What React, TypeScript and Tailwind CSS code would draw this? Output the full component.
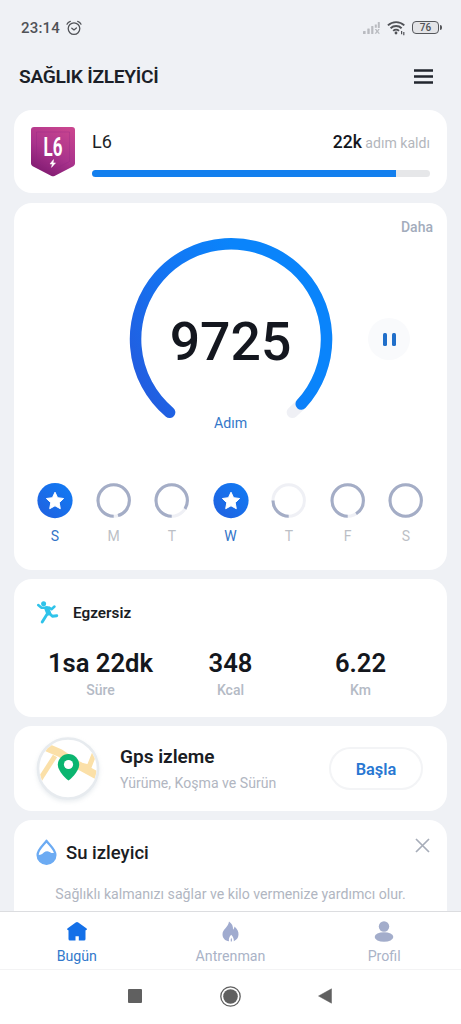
import type { ReactNode } from 'react';

type Day = { label: string; progress: number };

const days: Day[] = [
  { label: 'S', progress: 1.1 },
  { label: 'M', progress: 0.955 },
  { label: 'T', progress: 0.84 },
  { label: 'W', progress: 1.1 },
  { label: 'T', progress: 0.25 },
  { label: 'F', progress: 0.91 },
  { label: 'S', progress: 1 },
];

function Card({ className, children }: { className: string; children: ReactNode }) {
  return <section className={`mx-[14px] shrink-0 rounded-[18px] bg-white ${className}`}>{children}</section>;
}

function StatusBar() {
  return (
    <div className="flex h-[55px] shrink-0 items-center justify-between pl-[21px] pr-[19px] text-[#505257]">
      <div className="flex items-center gap-[6px]">
        <span className="pt-px text-[15px] leading-none font-medium tracking-[0.2px]">23:14</span>
        <svg width="16" height="16" viewBox="0 0 16 16" fill="none" stroke="currentColor" strokeWidth="1.3" strokeLinecap="round">
          <circle cx="8" cy="8.6" r="5.8" />
          <path d="M5.8 8.2 8 10l2.4-2M1 4.2C1.6 2.7 2.8 1.7 4.3 1.3M15 4.2c-.6-1.5-1.8-2.5-3.3-2.9" />
        </svg>
      </div>
      <div className="flex items-center">
        <svg width="18" height="14" viewBox="0 0 18 14" fill="#b9bbc0">
          <rect x="0" y="10" width="2.6" height="3" rx=".5" />
          <rect x="4.3" y="7.5" width="2.4" height="5.5" rx=".5" />
          <rect x="8.2" y="5" width="2.2" height="8" rx=".5" />
          <rect x="14.8" y="1" width="2" height="6" rx=".5" />
          <path d="M11.8 3.5h2v3.2h-2zM11.8 8l1.5 2.3-1.6 2.5h1.5l1.1-1.6 1.1 1.6h1.5l-1.7-2.5L16.7 8h-1.5l-.9 1.4L13.4 8z" />
        </svg>
        <svg className="ml-[6px]" width="19" height="16" viewBox="0 0 19 16" fill="none" stroke="currentColor" strokeWidth="1.9">
          <path d="M.9 5.4a11.8 11.8 0 0 1 16.4 0M3.6 8.2a7.9 7.9 0 0 1 11 0M6.2 10.9a4.2 4.2 0 0 1 5.8 0" />
          <circle cx="9" cy="13" r="1.4" fill="currentColor" stroke="none" />
          <path d="M14.6 11v3.2M16.8 12v3.2" strokeWidth="1.2" />
        </svg>
        <div className="ml-[6px] flex h-[13px] w-[27px] items-center justify-center rounded-[4px] border-[1.5px] border-[#55575b] bg-[#e3e4e7] text-[10px] leading-none font-medium">
          76
        </div>
        <div className="ml-px h-[5px] w-[2px] rounded-r bg-[#55575b]" />
      </div>
    </div>
  );
}

function LevelBadge() {
  return (
    <svg width="46" height="52" viewBox="0 0 46 52">
      <defs>
        <linearGradient id="badge" x1="0.8" y1="0" x2="0.3" y2="1">
          <stop offset="0" stopColor="#c9458f" />
          <stop offset="0.55" stopColor="#a9338c" />
          <stop offset="1" stopColor="#7f1a70" />
        </linearGradient>
      </defs>
      <path d="M4 1h38a3 3 0 0 1 3 3v33.5a3 3 0 0 1-1.7 2.7L24.5 49.9a3.5 3.5 0 0 1-3 0L2.7 40.2A3 3 0 0 1 1 37.5V4a3 3 0 0 1 3-3z" fill="url(#badge)" />
      <path d="M6.5 6h33v29.5L23 44 6.5 35.5z" fill="none" stroke="#8d2386" strokeOpacity=".3" />
      <text x="0" y="0" transform="translate(23 29.5) scale(.64 1)" textAnchor="middle" fontSize="26.5" fontWeight="700" fill="#fff">
        L6
      </text>
      <path d="m23.5 33.6-3.5 4.4h2.3l-.8 3.4 4-4.5h-2.3z" fill="#fff" stroke="#fff" strokeWidth=".5" />
    </svg>
  );
}

function StepGauge() {
  return (
    <div className="h-[204px] w-[204px] relative">
      <svg width="204" height="204" viewBox="0 0 204 204" fill="none" strokeWidth="11.5" strokeLinecap="round">
        <defs>
          <linearGradient id="gauge" x1="0" y1="1" x2="1" y2="0.5">
            <stop offset="0" stopColor="#2558dc" />
            <stop offset="0.5" stopColor="#1277f4" />
            <stop offset="0.8" stopColor="#0a84fb" />
            <stop offset="1" stopColor="#0a84fb" />
          </linearGradient>
        </defs>
        <path d="M40.6 175.3A95.5 95.5 0 1 1 163.4 175.3" stroke="#eff0f5" />
        <path d="M40.6 175.3A95.5 95.5 0 1 1 172.2 167" stroke="url(#gauge)" />
      </svg>
      <div className="absolute inset-0 flex items-center justify-center pt-[6px] text-[53.5px] leading-none font-medium text-[#14171f]">
        9725
      </div>
      <div className="absolute inset-x-0 top-[176px] text-center text-[14.2px] leading-[20px] text-[#3478c9]">Adım</div>
    </div>
  );
}

function DayRing({ label, progress }: Day) {
  const done = progress > 1;
  return (
    <div className="flex w-9 flex-col items-center">
      <svg width="36" height="36" viewBox="0 0 36 36" fill="none">
        {done ? (
          <>
            <circle cx="18" cy="17.6" r="17.6" fill="url(#day)" />
            <path
              d="m18 9.2 2.6 5.5 6 .8-4.4 4.2 1.1 6L18 22.8l-5.3 2.9 1.1-6-4.4-4.2 6-.8z"
              fill="#fff"
              stroke="#fff"
              strokeWidth="1"
              strokeLinejoin="round"
            />
            <defs>
              <linearGradient id="day" x1="0" y1="1" x2="1" y2="0">
                <stop offset="0" stopColor="#2160df" />
                <stop offset="1" stopColor="#107cf5" />
              </linearGradient>
            </defs>
          </>
        ) : (
          <>
            <circle cx="17.7" cy="17.5" r="15.7" stroke="#eff0f5" strokeWidth="3" />
            <circle
              cx="17.7"
              cy="17.5"
              r="15.7"
              stroke="#a4adc6"
              strokeWidth="3.1"
              pathLength="100"
              strokeDasharray={`${progress * 100} 100`}
              transform="rotate(90 17.7 17.5)"
            />
          </>
        )}
      </svg>
      <span className={done ? 'mt-[7px] text-[14px] leading-5 text-[#3274c8]' : 'mt-[7px] text-[14px] leading-5 text-[#bcbfc6]'}>
        {label}
      </span>
    </div>
  );
}

function Stat({ value, label }: { value: string; label: string }) {
  return (
    <div className="w-[130px] text-center">
      <div className="text-[25.6px] leading-[30px] font-semibold text-[#14171d]">{value}</div>
      <div className="mt-[3px] text-[14px] leading-[18px] font-medium text-[#b4bac5]">{label}</div>
    </div>
  );
}

function MapIcon() {
  return (
    <svg width="66" height="66" viewBox="0 0 66 66" className="drop-shadow-[0_2px_2px_rgba(120,140,160,0.16)]">
      <clipPath id="map">
        <circle cx="33" cy="32.5" r="28.5" />
      </clipPath>
      <circle cx="33" cy="32.5" r="30" fill="#fff" stroke="#e7ebef" strokeWidth="2.6" />
      <g clipPath="url(#map)" stroke="#fbe0a8" fill="none">
        <path d="M12 11.5 25 17l18 12 20 11" strokeWidth="8" />
        <path d="M4 45 20 20" strokeWidth="5" />
        <path d="m45 29 9 2 6-15" strokeWidth="5" />
      </g>
      <path d="M33.5 44.5c-.8 0-10.7-8.8-10.7-15.7a10.7 10.7 0 0 1 21.4 0C44.2 35.7 34.3 44.5 33.5 44.5z" fill="#0bb570" />
      <circle cx="33.5" cy="28.5" r="4.6" fill="#fff" />
    </svg>
  );
}

function BottomNav() {
  return (
    <nav className="grid h-[58px] shrink-0 grid-cols-3 border-t border-[#dcdde0] bg-white text-center text-[14.2px] leading-5">
      <div className="flex flex-col items-center pt-[10px] text-[#3279cb]">
        <svg width="20" height="19" viewBox="0 0 20 19" fill="#1470e8">
          <path d="M8.7.6a2 2 0 0 1 2.6 0l8 5.7c1.1.8.6 1.9-.5 1.9H18.5V17a1.5 1.5 0 0 1-1.5 1.5h-5.2V14.2H8.5V18.5H3A1.5 1.5 0 0 1 1.5 17V8.2H1.2C0 8.2-.3 7.1.7 6.3z" />
        </svg>
        <span className="mt-[5px]">Bugün</span>
      </div>
      <div className="flex flex-col items-center pt-[9px] text-[#aab3c7]">
        <svg width="17" height="21" viewBox="0 0 17 21" fill="#a0abcf">
          <path d="M7 .5c3 2.3 4.3 4.6 4 8.2.9-.9 1.3-1.9 1.5-3.2 2.9 2.7 4.2 5.2 4 8.3-.2 3.100-1.900 5.300-4.700 6.400.3-1.900-.6-4.300-2.600-6.400C7.200 15.900 6.500 18 7 20.300 3 19.800.5 17.100.5 13.200.5 8.200 6.300 6.300 7 .5z" />
          <path d="M9.300 16.800c.7 1.200.8 2.500.5 3.700H8.800c-.3-1.300-.1-2.500.5-3.700z" />
        </svg>
        <span className="mt-[4px]">Antrenman</span>
      </div>
      <div className="flex flex-col items-center pt-[9px] text-[#aab3c7]">
        <svg width="20" height="21" viewBox="0 0 20 21" fill="#a3adcb">
          <circle cx="10" cy="5.5" r="5.2" />
          <ellipse cx="10" cy="16" rx="9.3" ry="4.8" />
        </svg>
        <span className="mt-[4px]">Profil</span>
      </div>
    </nav>
  );
}

function SystemNav() {
  return (
    <div className="flex h-[55px] shrink-0 items-center border-t border-[#f3f3f4] bg-white pb-[2px] pl-[128px] text-[#606060]">
      <div className="h-[14px] w-[14px] rounded-[1px] bg-current" />
      <svg className="ml-[78px]" width="21" height="21" viewBox="0 0 21 21">
        <circle cx="10.5" cy="10.5" r="9.7" fill="none" stroke="currentColor" strokeWidth="1.3" />
        <circle cx="10.5" cy="10.5" r="7.3" fill="currentColor" />
      </svg>
      <svg className="ml-[77px]" width="14" height="16" viewBox="0 0 14 16" fill="currentColor">
        <path d="M13.5.8v14.4L.5 8z" stroke="currentColor" strokeWidth=".5" strokeLinejoin="round" />
      </svg>
    </div>
  );
}

export default function App() {
  return (
    <div className="flex h-[1024px] w-[461px] flex-col overflow-hidden bg-[#eff1f5] font-[Roboto,sans-serif]">
      <StatusBar />
      <header className="flex h-[43px] shrink-0 items-center justify-between pr-[28px] pl-[19px]">
        <h1 className="text-[19.2px] leading-6 font-semibold tracking-[-0.3px] text-[#1b1f27]">SAĞLIK İZLEYİCİ</h1>
        <svg width="19" height="15" viewBox="0 0 19 15" stroke="#22262e" strokeWidth="2.3">
          <path d="M0 1.5h19M0 7.5h19M0 13.5h19" />
        </svg>
      </header>

      <main className="flex min-h-0 flex-1 flex-col overflow-hidden pt-[12px]">
        <Card className="flex h-[83px] pt-[16px] pr-[17px] pl-[16px]">
          <LevelBadge />
          <div className="ml-4 flex-1">
            <div className="flex items-baseline justify-between leading-[32px]">
              <span className="text-[18px] text-[#1c1f26]">L6</span>
              <span className="text-[14.1px] text-[#b3b6bc]">
                <span className="text-[17.5px] font-medium text-[#14171d]">22k</span> adım kaldı
              </span>
            </div>
            <div className="mt-[11px] h-[7px] overflow-hidden rounded-full bg-[#e6e7e9]">
              <div className="h-full w-[90%] bg-[#137fee]" />
            </div>
          </div>
        </Card>

        <Card className="relative mt-[10px] flex h-[367px] flex-col items-center pt-[34px]">
          <button className="absolute top-[14px] right-[14px] text-[14px] leading-5 font-medium text-[#a3acbc]">Daha</button>
          <StepGauge />
          <button className="absolute top-[115px] right-[37px] flex h-[42px] w-[42px] items-center justify-center gap-[5px] rounded-full bg-[#f9fafc]">
            <span className="h-[13px] w-[4px] rounded-[1.5px] bg-[#216fca]" />
            <span className="h-[13px] w-[4px] rounded-[1.5px] bg-[#216fca]" />
          </button>
          <div className="mt-[42px] flex w-[387px] justify-between">
            {days.map((day, i) => (
              <DayRing key={i} {...day} />
            ))}
          </div>
        </Card>

        <Card className="mt-[9px] h-[138px] pt-[21px]">
          <div className="flex h-[24px] items-center pl-[22px]">
            <svg width="23" height="23" viewBox="0 0 23 23" fill="none" stroke="#2fc3ea" strokeLinecap="round" strokeLinejoin="round">
              <circle cx="7.6" cy="2.8" r="2.5" fill="#2fc3ea" stroke="none" />
              <path d="M10.800 7.500 12.600 12" strokeWidth="5" />
              <path d="M10.500 6.800 5.500 6.800 2.200 4M13 6.500l2.500 1.700L18.500 5.500" strokeWidth="2.500" />
              <path d="m13 12 3.400 3.200 4.400-.5M11.500 12.500 9 16.500 6.200 21" strokeWidth="2.900" />
            </svg>
            <h2 className="ml-[14px] pt-[2px] text-[15.3px] leading-5 font-semibold text-[#1a1d24]">Egzersiz</h2>
          </div>
          <div className="mt-[24px] flex justify-center">
            <Stat value="1sa 22dk" label="Süre" />
            <Stat value="348" label="Kcal" />
            <Stat value="6.22" label="Km" />
          </div>
        </Card>

        <Card className="mt-[9px] flex h-[85px] items-center pr-[24px] pl-[21px]">
          <MapIcon />
          <div className="ml-[19px] flex-1">
            <h2 className="text-[19px] leading-6 font-semibold text-[#1a1d24]">Gps izleme</h2>
            <p className="mt-[4px] text-[14.1px] leading-5 whitespace-nowrap text-[#b1b6c1]">Yürüme, Koşma ve Sürün</p>
          </div>
          <button className="h-[43px] w-[94px] rounded-full border-2 border-[#f3f4f6] pt-[3px] text-[16.4px] font-semibold text-[#2877d2]">
            Başla
          </button>
        </Card>

        <Card className="relative mt-[9px] h-[130px] pt-[19px]">
          <div className="flex h-[26px] items-center pl-[22px]">
            <svg width="21" height="26" viewBox="0 0 21 26">
              <path d="M10.5 1.8C8.3 5.2 1.6 10.2 1.6 15.9a8.9 8.9 0 0 0 17.8 0c0-5.7-6.7-10.7-8.9-14.1z" fill="#fff" stroke="#6cabf3" strokeWidth="2.3" strokeLinejoin="round" />
              <path d="M1.6 16c3.2.4 4.6-.9 6.2-2.4 2-1.7 3.9-1.9 5.8-.7 1.9 1.3 3.7 1.5 5.3.9.4 1 .6 1.5.6 2.5a9 9 0 0 1-18 0z" fill="#6cabf3" />
            </svg>
            <h2 className="ml-[9px] pt-[2px] text-[18.5px] leading-6 font-medium text-[#1a1d24]">Su izleyici</h2>
          </div>
          <svg className="absolute top-[18px] right-[17px]" width="15" height="15" viewBox="0 0 15 15" stroke="#a7adb9" strokeWidth="1.7">
            <path d="m1 1 13 13M14 1 1 14" />
          </svg>
          <p className="mt-[19px] text-center text-[14.15px] leading-5 text-[#b1b6c1]">
            Sağlıklı kalmanızı sağlar ve kilo vermenize yardımcı olur.
          </p>
        </Card>
      </main>

      <BottomNav />
      <SystemNav />
    </div>
  );
}
